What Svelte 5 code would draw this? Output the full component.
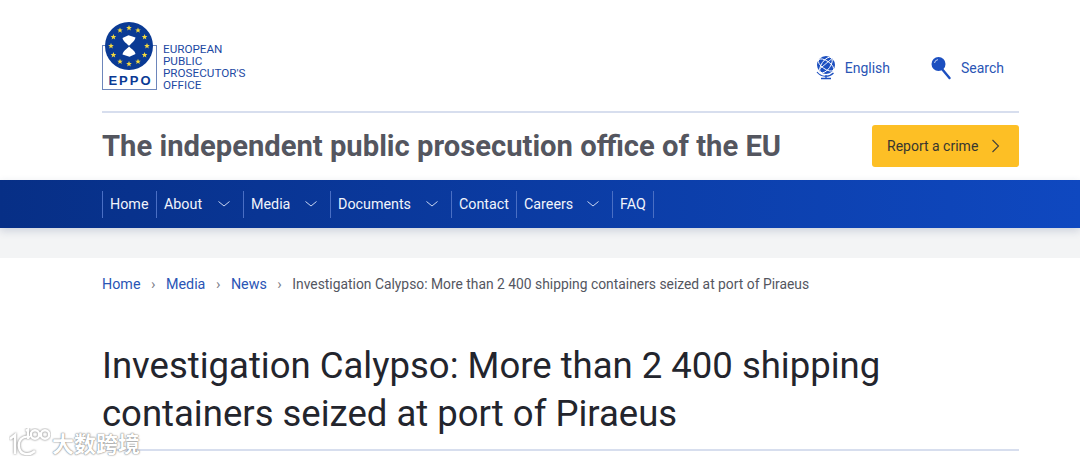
<script>
  const nav = [
    { label: 'Home', w: 54 }, { label: 'About', sub: true, w: 87 }, { label: 'Media', sub: true, w: 87 },
    { label: 'Documents', sub: true, w: 121 }, { label: 'Contact', w: 65 }, { label: 'Careers', sub: true, w: 96 }, { label: 'FAQ', w: 41 }
  ];
  const starAngles = Array.from({ length: 12 }, (_, i) => i * 30);
  const starPoints = '0,-2.9 0.8,-0.9 2.8,-0.9 1.2,0.4 1.8,2.4 0,1.2 -1.8,2.4 -1.2,0.4 -2.8,-0.9 -0.8,-0.9';
</script>

<div class="page">
  <div class="wrap">
    <header class="top">
      <div class="brand">
        <div class="mark">
          <svg class="emblem" viewBox="0 0 48 48" aria-hidden="true">
            <circle cx="24" cy="24" r="24" fill="#0a3a94" />
            {#each starAngles as a}
              <polygon
                points={starPoints}
                fill="#f4d93e"
                transform="translate({24 + 18 * Math.sin((a * Math.PI) / 180)} {24 - 18 * Math.cos((a * Math.PI) / 180)})"
              />
            {/each}
            <path d="M17.5 16 L23.5 13.2 L30.5 15.5 C29.8 19 26.5 21 24.4 23.6 L23.6 23.6 C21.5 21 18.2 19.5 17.5 16Z" fill="#fff" />
            <path d="M24 24.6 C21.8 27 18.2 29 17.5 32.5 L24.5 34.8 L30.5 32 C29.8 28.5 26.2 27 24 24.6Z" fill="#fff" />
          </svg>
          <span class="eppo">EPPO</span>
        </div>
        <div class="brandname">EUROPEAN<br />PUBLIC<br />PROSECUTOR'S<br />OFFICE</div>
      </div>
      <div class="tools">
        <a class="tool" href="#lang">
          <svg width="22" height="25" viewBox="0 0 22 25" aria-hidden="true">
            <circle cx="11" cy="10" r="9" fill="#1c4fc0" />
            <g fill="none" stroke="#fff" stroke-width="0.9">
              <ellipse cx="11" cy="10" rx="4.4" ry="9" transform="rotate(35 11 10)" />
              <ellipse cx="11" cy="10" rx="9" ry="4" transform="rotate(35 11 10)" />
              <path d="M4 14.5 L17 3.5" />
            </g>
            <path d="M2 17 A11 11 0 0 0 18.5 18" fill="none" stroke="#1c4fc0" stroke-width="1.2" />
            <path d="M11 20 V23 M6 23.5 H16" stroke="#1c4fc0" stroke-width="1.3" fill="none" />
          </svg>
          <span>English</span>
        </a>
        <a class="tool search" href="#search">
          <svg width="20" height="24" viewBox="0 0 20 24" aria-hidden="true">
            <circle cx="7.5" cy="8" r="7" fill="#1c4fc0" />
            <path d="M3.5 7 A4 4 0 0 1 7 3.6" fill="none" stroke="#fff" stroke-width="1" opacity=".75" />
            <path d="M11 13 L18.5 22" stroke="#1c4fc0" stroke-width="2.4" stroke-linecap="round" />
          </svg>
          <span>Search</span>
        </a>
      </div>
    </header>
    <div class="tagrow">
      <div class="tagline">The independent public prosecution office of the EU</div>
      <a class="report" href="#report">
        <span>Report a crime</span>
        <svg width="9" height="14" viewBox="0 0 9 14" aria-hidden="true"><path d="M1.5 1 L7.5 7 L1.5 13" fill="none" stroke="#43403a" stroke-width="1.1" /></svg>
      </a>
    </div>
  </div>

  <nav class="nav">
    <ul class="navlist">
      {#each nav as item}
        <li class="navitem" style="width: {item.w}px">
          <span>{item.label}</span>
          {#if item.sub}
            <svg width="12" height="6" viewBox="0 0 12 6" aria-hidden="true"><path d="M0.5 0.5 L6 5 L11.5 0.5" fill="none" stroke="#c9d6f2" stroke-width="1" /></svg>
          {/if}
        </li>
      {/each}
    </ul>
  </nav>
  <div class="band"></div>

  <div class="wrap">
    <div class="crumbs">
      <a href="#home">Home</a><i>›</i>
      <a href="#media">Media</a><i>›</i>
      <a href="#news">News</a><i>›</i>
      <span>Investigation Calypso: More than 2 400 shipping containers seized at port of Piraeus</span>
    </div>
    <h1>Investigation Calypso: More than 2 400 shipping containers seized at port of Piraeus</h1>
    <div class="rule"></div>
  </div>

  <div class="watermark" aria-hidden="true">
    <svg width="42" height="28" viewBox="0 0 42 28">
      <g fill="none" stroke="#fff" stroke-width="2.4" class="wm">
        <path d="M1 11 L6 7 V26" />
        <path d="M21 9 C13 7 9 13 10 19 C11 27 20 28 26 23" />
        <path d="M17 3 L19 1.5 V11" />
        <circle cx="26" cy="6.5" r="4.2" /><circle cx="36" cy="6.5" r="4.2" />
      </g>
    </svg>
    <span>大数跨境</span>
  </div>
</div>

<style>
  :global(body) { margin: 0; background: #fff; }
  .page {
    position: relative;
    height: 462px;
    overflow: hidden;
    font-family: Roboto, "Noto Sans", sans-serif;
    color: #23252d;
  }
  a { text-decoration: none; color: inherit; }
  .wrap { padding: 0 61px 0 102px; }
  .top {
    height: 111px;
    display: flex;
    justify-content: space-between;
    border-bottom: 2px solid #d7deee;
  }
  .brand { display: flex; align-items: flex-end; gap: 6px; padding: 22px 0 0 0; height: 68px; }
  .mark {
    position: relative;
    width: 53px;
    height: 43px;
    border: 1px solid #6d86bb;
    display: flex;
    align-items: flex-end;
    justify-content: center;
    margin-top: 25px;
  }
  .emblem { position: absolute; left: 2px; top: -24px; width: 48px; height: 48px; }
  .eppo {
    font: 700 13px/16px "Liberation Sans", sans-serif;
    letter-spacing: 2px;
    color: #0a3a94;
    padding-left: 2px;
  }
  .brandname {
    font-size: 11.7px;
    line-height: 12px;
    color: #1d4aa3;
    margin-bottom: -1px;
  }
  .tools { display: flex; gap: 41px; padding: 55px 15px 0 0; align-items: flex-start; }
  .tool { display: flex; align-items: center; gap: 8px; font-size: 14px; color: #2a55b5; height: 25px; }
  .tool.search { gap: 10px; }
  .tagrow {
    height: 67px;
    box-sizing: border-box;
    padding-bottom: 2px;
    display: flex;
    align-items: center;
    justify-content: space-between;
  }
  .tagline { font-size: 29.2px; font-weight: 700; color: #54565f; }
  .report {
    width: 147px;
    height: 42px;
    box-sizing: border-box;
    background: #fdbf25;
    border-radius: 3px;
    display: flex;
    align-items: center;
    justify-content: space-between;
    padding: 0 19px 0 15px;
    font-size: 14px;
    color: #38362f;
  }
  .nav {
    height: 48px;
    background: linear-gradient(90deg, #072f86 0%, #0f48c0 100%);
    box-shadow: 0 3px 8px rgba(40, 60, 110, 0.18);
    position: relative;
    padding-left: 102px;
    display: flex;
    align-items: center;
  }
  .navlist { list-style: none; margin: 0; padding: 0; display: flex; border-right: 1px solid #4a6fc4; height: 27px; }
  .navitem {
    display: flex;
    align-items: center;
    box-sizing: border-box;
    justify-content: space-between;
    padding: 0 7px 0 7px;
    border-left: 1px solid #4a6fc4;
    color: #f1f4fb;
    font-size: 14.3px;
  }
  .navitem svg { margin-right: 6px; }
  .band { height: 30px; background: #f3f4f5; }
  .crumbs {
    height: 52px;
    display: flex;
    align-items: center;
    font-size: 13.85px;
    color: #54565f;
  }
  .crumbs a { color: #2a55b5; font-size: 14.3px; }
  .crumbs i { font-style: normal; color: #7d808a; margin: 0 10.5px; font-size: 15px; }
  h1 {
    margin: 32px 0 0;
    font-size: 36.5px;
    line-height: 48px;
    font-weight: 400;
    color: #23252d;
    max-width: 800px;
  }
  .rule { height: 2px; background: #d7deee; margin-top: 11px; }
  .watermark {
    position: absolute;
    left: 9px;
    top: 426px;
    display: flex;
    align-items: center;
    gap: 1px;
    font-family: "Noto Sans CJK SC", sans-serif;
    font-size: 22px;
    font-weight: 700;
    color: #fff;
    text-shadow: 0 0 1px #777, 0 0 2px #888;
  }
  .wm { filter: drop-shadow(0 0 1px #777); }
</style>
